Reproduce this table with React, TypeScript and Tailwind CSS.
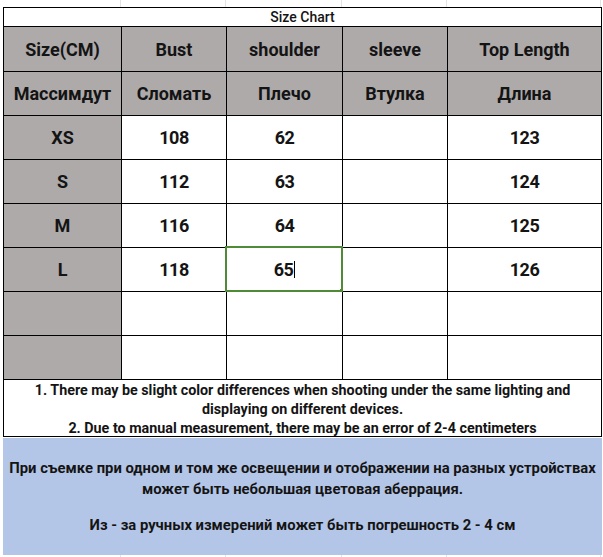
import React from "react";

const COLS = "grid grid-cols-[118px_105px_116px_105px_154px]";
const GRAY = "bg-[#aeaaaa]";

type Row = { cells: string[]; h: string; head?: boolean };

const rows: Row[] = [
  { cells: ["Size(CM)", "Bust", "shoulder", "sleeve", "Top Length"], h: "h-[45px]", head: true },
  { cells: ["Массимдут", "Сломать", "Плечо", "Втулка", "Длина"], h: "h-[44px]", head: true },
  { cells: ["XS", "108", "62", "", "123"], h: "h-[44px]" },
  { cells: ["S", "112", "63", "", "124"], h: "h-[44px]" },
  { cells: ["M", "116", "64", "", "125"], h: "h-[44px]" },
  { cells: ["L", "118", "65", "", "126"], h: "h-[44px]" },
  { cells: ["", "", "", "", ""], h: "h-[44px]" },
  { cells: ["", "", "", "", ""], h: "h-[44px]" },
];

function FaintStrip({ h }: { h: string }) {
  return (
    <div className={`${h} flex`}>
      <div className="w-[3px]" />
      <div className="w-[118px] border-r border-[#e3e3e3]" />
      <div className="w-[105px] border-r border-[#e3e3e3]" />
      <div className="w-[116px] border-r border-[#e3e3e3]" />
      <div className="w-[105px] border-r border-[#e3e3e3]" />
      <div className="w-[154px] border-r border-[#e3e3e3]" />
    </div>
  );
}

export default function App() {
  return (
    <div
      className="w-[603px] h-[557px] bg-white overflow-hidden text-[#141414]"
      style={{ fontFamily: "Roboto, 'Liberation Sans', sans-serif" }}
    >
      <FaintStrip h="h-[7px]" />
      <div className="ml-[3px] w-[599px] border-l border-t border-black">
        <div className="h-[19px] border-r border-b border-black flex items-center justify-center text-[14px] font-medium leading-none">
          Size Chart
        </div>
        {rows.map((r, ri) => (
          <div key={ri} className={COLS}>
            {r.cells.map((c, ci) => {
              const gray = r.head || ci === 0;
              const sel = ri === 5 && ci === 2;
              return (
                <div
                  key={ci}
                  className={`${r.h} relative border-r border-b border-black flex items-center justify-center text-[18px] font-bold ${
                    gray ? GRAY : "bg-white"
                  } ${!r.head && ci > 0 ? "tracking-[-0.5px]" : ""}`}
                >
                  {c}
                  {sel && (
                    <>
                      <span className="inline-block w-px h-[17px] bg-black ml-[1px]" />
                      <div className="absolute -top-[2px] -left-[2px] -right-[1px] -bottom-[1px] border-2 border-[#4f8a37]" />
                      <div className="absolute -right-[2px] -bottom-[2px] w-[4px] h-[4px] bg-[#4f8a37]" />
                    </>
                  )}
                </div>
              );
            })}
          </div>
        ))}
        <div className="h-[57px] border-r border-b border-black flex flex-col items-center pt-[1px] text-[14.3px] font-bold leading-[19px] text-center whitespace-nowrap">
          <div>1. There may be slight color differences when shooting under the same lighting and</div>
          <div>displaying on different devices.</div>
          <div>2. Due to manual measurement, there may be an error of 2-4 centimeters</div>
        </div>
      </div>
      <div className="mt-[1px] ml-[3px] w-[599px] h-[117px] bg-[#b4c6e7] flex flex-col items-center justify-center text-[14.8px] font-bold leading-[21px] text-center whitespace-nowrap">
        <div>При съемке при одном и том же освещении и отображении на разных устройствах</div>
        <div>может быть небольшая цветовая аберрация.</div>
        <div className="h-[15px]" />
        <div>Из - за ручных измерений может быть погрешность 2 - 4 см</div>
      </div>
      <FaintStrip h="h-[3px]" />
    </div>
  );
}
